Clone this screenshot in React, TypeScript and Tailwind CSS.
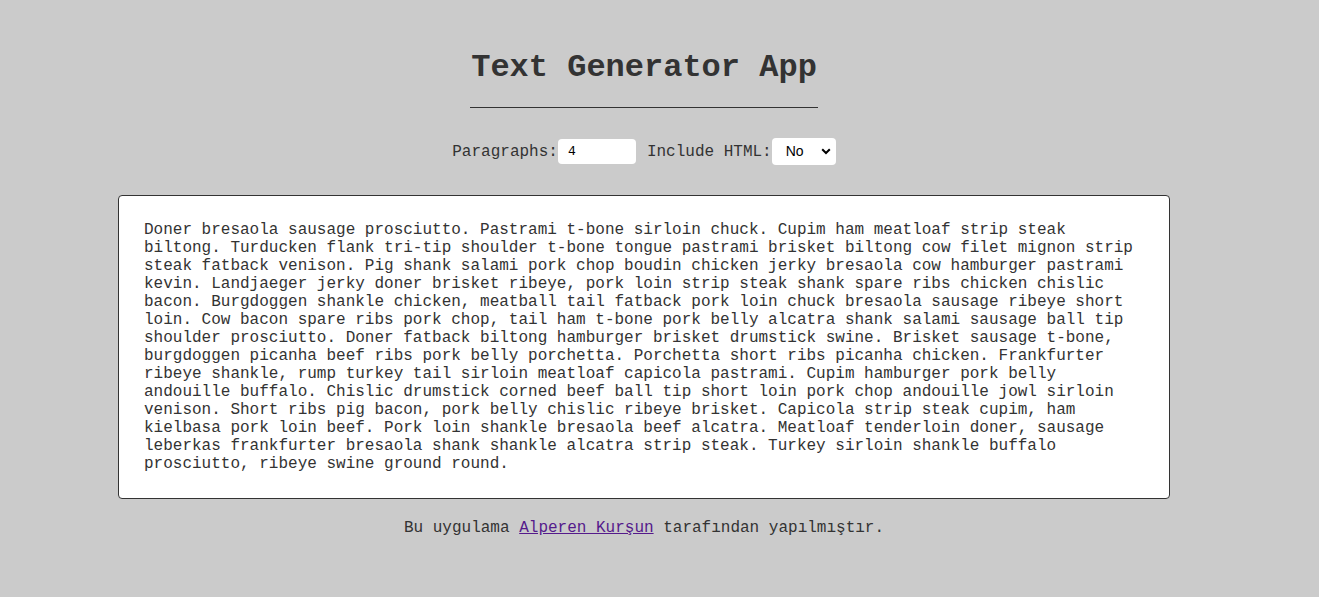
import React from "react";

const TEXT =
  "Doner bresaola sausage prosciutto. Pastrami t-bone sirloin chuck. Cupim ham meatloaf strip steak biltong. Turducken flank tri-tip shoulder t-bone tongue pastrami brisket biltong cow filet mignon strip steak fatback venison. Pig shank salami pork chop boudin chicken jerky bresaola cow hamburger pastrami kevin. Landjaeger jerky doner brisket ribeye, pork loin strip steak shank spare ribs chicken chislic bacon. Burgdoggen shankle chicken, meatball tail fatback pork loin chuck bresaola sausage ribeye short loin. Cow bacon spare ribs pork chop, tail ham t-bone pork belly alcatra shank salami sausage ball tip shoulder prosciutto. Doner fatback biltong hamburger brisket drumstick swine. Brisket sausage t-bone, burgdoggen picanha beef ribs pork belly porchetta. Porchetta short ribs picanha chicken. Frankfurter ribeye shankle, rump turkey tail sirloin meatloaf capicola pastrami. Cupim hamburger pork belly andouille buffalo. Chislic drumstick corned beef ball tip short loin pork chop andouille jowl sirloin venison. Short ribs pig bacon, pork belly chislic ribeye brisket. Capicola strip steak cupim, ham kielbasa pork loin beef. Pork loin shankle bresaola beef alcatra. Meatloaf tenderloin doner, sausage leberkas frankfurter bresaola shank shankle alcatra strip steak. Turkey sirloin shankle buffalo prosciutto, ribeye swine ground round.";

export default function App() {
  return (
    <div className="min-h-screen w-full bg-[#cbcbcb] text-[#333] [font-family:'Liberation_Mono','Courier_New',monospace]">
      <div className="w-[1288px] flex flex-col items-center pt-[50px]">
        <h1 className="inline-block text-[32px] leading-[36px] font-bold text-[#333] border-b border-[#333] pb-[21px] px-[1px]">
          Text Generator App
        </h1>
        <div className="mt-[30px] flex items-center text-[16px]">
          <label>Paragraphs:</label>
          <input
            type="number"
            defaultValue={4}
            className="w-[78px] h-[25px] bg-white rounded-[4px] pl-[10px] text-[13px] text-black outline-none [font-family:'Liberation_Mono',monospace] [appearance:textfield] [&::-webkit-inner-spin-button]:appearance-none"
          />
          <label className="ml-[11px]">Include HTML:</label>
          <div className="relative w-[64px] h-[27px] bg-white rounded-[4px] flex items-center">
            <span className="pl-[14px] text-[14px] text-black [font-family:'Liberation_Sans',Arial,sans-serif]">No</span>
            <svg className="absolute right-[5px] top-[10px]" width="10" height="7" viewBox="0 0 10 7">
              <path d="M1.2 1.2 L5 5 L8.8 1.2" stroke="#000" strokeWidth="2" fill="none" />
            </svg>
          </div>
        </div>
        <div className="mt-[30px] w-[1052px] bg-white border border-[#333] rounded-[4px] px-[25px] pt-[25px] pb-[25px] text-[16px] leading-[18px] text-[#333]">
          <p>{TEXT}</p>
        </div>
        <p className="mt-[20px] text-[16px] leading-[18px] text-[#333]">
          Bu uygulama{" "}
          <a href="#" className="text-[#551a8b] underline">
            Alperen Kurşun
          </a>{" "}
          tarafından yapılmıştır.
        </p>
      </div>
    </div>
  );
}
